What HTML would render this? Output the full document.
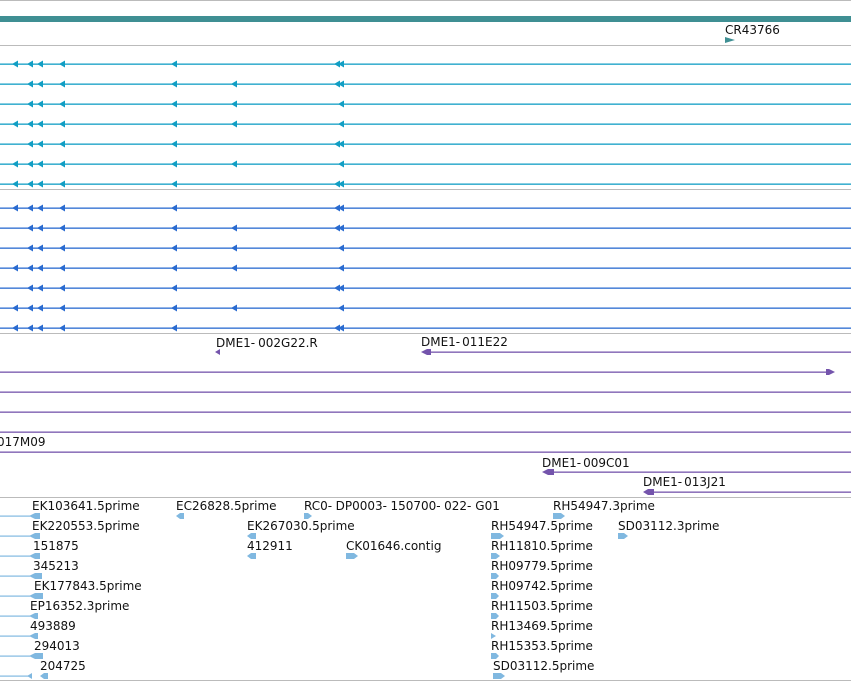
<!DOCTYPE html>
<html><head><meta charset="utf-8"><style>
html,body{margin:0;padding:0;background:#fff;width:851px;height:681px;overflow:hidden}
svg{display:block}
text{font-family:"DejaVu Sans","Liberation Sans",sans-serif;font-size:12px;fill:#111}
</style></head><body>
<svg width="851" height="681" viewBox="0 0 851 681" xmlns="http://www.w3.org/2000/svg">
<defs>
<path id="la" d="M0,0 L6,-3.5 L6,3.5 Z"/>
</defs>
<g fill="#bbb">
<rect x="0" y="0" width="851" height="1"/>
<rect x="0" y="45" width="851" height="1"/>
<rect x="0" y="189" width="851" height="1"/>
<rect x="0" y="333" width="851" height="1"/>
<rect x="0" y="497" width="851" height="1"/>
<rect x="0" y="680" width="851" height="1"/>
</g>
<rect x="0" y="16" width="851" height="6" fill="#3f8f93"/>
<text x="725" y="34">CR43766</text>
<path d="M725,37 L735,40 L725,43 Z" fill="#3f8f93"/>

<g fill="#119ec4">
<rect x="0" y="63.5" width="851" height="1.3"/><rect x="0" y="83.5" width="851" height="1.3"/><rect x="0" y="103.5" width="851" height="1.3"/><rect x="0" y="123.5" width="851" height="1.3"/><rect x="0" y="143.5" width="851" height="1.3"/><rect x="0" y="163.5" width="851" height="1.3"/><rect x="0" y="183.5" width="851" height="1.3"/>
<g transform="translate(0,64)"><use href="#la" x="12"/><use href="#la" x="27"/><use href="#la" x="37"/><use href="#la" x="59"/><use href="#la" x="171"/><use href="#la" x="334"/><use href="#la" x="338"/></g>
<g transform="translate(0,84)"><use href="#la" x="27"/><use href="#la" x="37"/><use href="#la" x="59"/><use href="#la" x="171"/><use href="#la" x="231"/><use href="#la" x="334"/><use href="#la" x="338"/></g>
<g transform="translate(0,104)"><use href="#la" x="27"/><use href="#la" x="37"/><use href="#la" x="59"/><use href="#la" x="171"/><use href="#la" x="231"/><use href="#la" x="338"/></g>
<g transform="translate(0,124)"><use href="#la" x="12"/><use href="#la" x="27"/><use href="#la" x="37"/><use href="#la" x="59"/><use href="#la" x="171"/><use href="#la" x="231"/><use href="#la" x="338"/></g>
<g transform="translate(0,144)"><use href="#la" x="27"/><use href="#la" x="37"/><use href="#la" x="59"/><use href="#la" x="171"/><use href="#la" x="334"/><use href="#la" x="338"/></g>
<g transform="translate(0,164)"><use href="#la" x="12"/><use href="#la" x="27"/><use href="#la" x="37"/><use href="#la" x="59"/><use href="#la" x="171"/><use href="#la" x="231"/><use href="#la" x="338"/></g>
<g transform="translate(0,184)"><use href="#la" x="12"/><use href="#la" x="27"/><use href="#la" x="37"/><use href="#la" x="59"/><use href="#la" x="171"/><use href="#la" x="334"/><use href="#la" x="338"/></g>
</g>

<g fill="#2a6bd0">
<rect x="0" y="207.5" width="851" height="1.3"/><rect x="0" y="227.5" width="851" height="1.3"/><rect x="0" y="247.5" width="851" height="1.3"/><rect x="0" y="267.5" width="851" height="1.3"/><rect x="0" y="287.5" width="851" height="1.3"/><rect x="0" y="307.5" width="851" height="1.3"/><rect x="0" y="327.5" width="851" height="1.3"/>
<g transform="translate(0,208)"><use href="#la" x="12"/><use href="#la" x="27"/><use href="#la" x="37"/><use href="#la" x="59"/><use href="#la" x="171"/><use href="#la" x="334"/><use href="#la" x="338"/></g>
<g transform="translate(0,228)"><use href="#la" x="27"/><use href="#la" x="37"/><use href="#la" x="59"/><use href="#la" x="171"/><use href="#la" x="231"/><use href="#la" x="334"/><use href="#la" x="338"/></g>
<g transform="translate(0,248)"><use href="#la" x="27"/><use href="#la" x="37"/><use href="#la" x="59"/><use href="#la" x="171"/><use href="#la" x="231"/><use href="#la" x="338"/></g>
<g transform="translate(0,268)"><use href="#la" x="12"/><use href="#la" x="27"/><use href="#la" x="37"/><use href="#la" x="59"/><use href="#la" x="171"/><use href="#la" x="231"/><use href="#la" x="338"/></g>
<g transform="translate(0,288)"><use href="#la" x="27"/><use href="#la" x="37"/><use href="#la" x="59"/><use href="#la" x="171"/><use href="#la" x="334"/><use href="#la" x="338"/></g>
<g transform="translate(0,308)"><use href="#la" x="12"/><use href="#la" x="27"/><use href="#la" x="37"/><use href="#la" x="59"/><use href="#la" x="171"/><use href="#la" x="231"/><use href="#la" x="338"/></g>
<g transform="translate(0,328)"><use href="#la" x="12"/><use href="#la" x="27"/><use href="#la" x="37"/><use href="#la" x="59"/><use href="#la" x="171"/><use href="#la" x="334"/><use href="#la" x="338"/></g>
</g>

<g fill="#7454ac">
<path d="M215,352 L220,349 L220,355 Z"/>
<rect x="425" y="351.5" width="426" height="1.3"/>
<path d="M421,352 L427,349 L431,349 L431,355 L427,355 Z"/>
<rect x="0" y="371.5" width="830" height="1.3"/>
<path d="M835,372 L829,369 L826,369 L826,375 L829,375 Z"/>
<rect x="0" y="391.5" width="851" height="1.3"/>
<rect x="0" y="411.5" width="851" height="1.3"/>
<rect x="0" y="431.5" width="851" height="1.3"/>
<rect x="0" y="451.5" width="851" height="1.3"/>
<rect x="548" y="471.5" width="303" height="1.3"/>
<path d="M542,472 L548,469 L554,469 L554,475 L548,475 Z"/>
<rect x="648" y="491.5" width="203" height="1.3"/>
<path d="M643,492 L648,489 L654,489 L654,495 L648,495 Z"/>
</g>
<text x="216" y="347">DME1-<tspan dx="3">002G22.R</tspan></text>
<text x="421" y="346">DME1-<tspan dx="2">011E22</tspan></text>
<text x="-3" y="446">017M09</text>
<text x="542" y="467">DME1-<tspan dx="2">009C01</tspan></text>
<text x="643" y="486">DME1-<tspan dx="2">013J21</tspan></text>

<g fill="#80b8e0">
<rect x="0" y="515.5" width="30" height="1.2"/><path d="M29,516 L35,513 L40,513 L40,519 L35,519 Z"/>
<rect x="0" y="535.5" width="30" height="1.2"/><path d="M29,536 L35,533 L40,533 L40,539 L35,539 Z"/>
<rect x="0" y="555.5" width="30" height="1.2"/><path d="M29,556 L35,553 L40,553 L40,559 L35,559 Z"/>
<rect x="0" y="575.5" width="30" height="1.2"/><path d="M29,576 L35,573 L42,573 L42,579 L35,579 Z"/>
<rect x="0" y="595.5" width="30" height="1.2"/><path d="M29,596 L35,593 L43,593 L43,599 L35,599 Z"/>
<rect x="0" y="615.5" width="30" height="1.2"/><path d="M29,616 L35,613 L38,613 L38,619 L35,619 Z"/>
<rect x="0" y="635.5" width="30" height="1.2"/><path d="M29,636 L35,633 L38,633 L38,639 L35,639 Z"/>
<rect x="0" y="655.5" width="30" height="1.2"/><path d="M29,656 L35,653 L43,653 L43,659 L35,659 Z"/>
<rect x="0" y="675.5" width="28" height="1.2"/><path d="M27,676 L32,673 L32,679 Z"/><path d="M40,676 L44,673 L48,673 L48,679 L44,679 Z"/>
<path d="M176,516 L180,513 L184,513 L184,519 L180,519 Z"/>
<path d="M312,516 L308,513 L304,513 L304,519 L308,519 Z"/>
<path d="M565,516 L561,513 L553,513 L553,519 L561,519 Z"/>
<path d="M247,536 L251,533 L256,533 L256,539 L251,539 Z"/>
<path d="M247,556 L251,553 L256,553 L256,559 L251,559 Z"/>
<path d="M358,556 L354,553 L346,553 L346,559 L354,559 Z"/>
<path d="M504,536 L500,533 L491,533 L491,539 L500,539 Z"/>
<path d="M628,536 L624,533 L618,533 L618,539 L624,539 Z"/>
<path d="M500,556 L496,553 L491,553 L491,559 L496,559 Z"/>
<path d="M499,576 L496,573 L491,573 L491,579 L496,579 Z"/>
<path d="M499,596 L496,593 L491,593 L491,599 L496,599 Z"/>
<path d="M499,616 L496,613 L491,613 L491,619 L496,619 Z"/>
<path d="M496,636 L491,633 L491,639 Z"/>
<path d="M499,656 L496,653 L491,653 L491,659 L496,659 Z"/>
<path d="M505,676 L501,673 L493,673 L493,679 L501,679 Z"/>
</g>
<g>
<text x="32" y="510">EK103641.5prime</text>
<text x="176" y="510">EC26828.5prime</text>
<text x="304" y="510">RC0-<tspan dx="3.5">DP0003-</tspan><tspan dx="3.5">150700-</tspan><tspan dx="3.5">022-</tspan><tspan dx="3.5">G01</tspan></text>
<text x="553" y="510">RH54947.3prime</text>
<text x="32" y="530">EK220553.5prime</text>
<text x="247" y="530">EK267030.5prime</text>
<text x="491" y="530">RH54947.5prime</text>
<text x="618" y="530">SD03112.3prime</text>
<text x="33" y="550">151875</text>
<text x="247" y="550">412911</text>
<text x="346" y="550">CK01646.contig</text>
<text x="491" y="550">RH11810.5prime</text>
<text x="33" y="570">345213</text>
<text x="491" y="570">RH09779.5prime</text>
<text x="34" y="590">EK177843.5prime</text>
<text x="491" y="590">RH09742.5prime</text>
<text x="30" y="610">EP16352.3prime</text>
<text x="491" y="610">RH11503.5prime</text>
<text x="30" y="630">493889</text>
<text x="491" y="630">RH13469.5prime</text>
<text x="34" y="650">294013</text>
<text x="491" y="650">RH15353.5prime</text>
<text x="40" y="670">204725</text>
<text x="493" y="670">SD03112.5prime</text>
</g>
</svg>
</body></html>
